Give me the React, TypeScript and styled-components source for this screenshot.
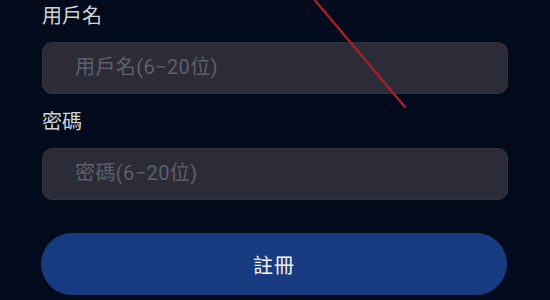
import React from "react";
import styled, { createGlobalStyle } from "styled-components";

const GlobalStyle = createGlobalStyle`
  html, body {
    margin: 0;
    padding: 0;
    background: #020b1b;
  }
  body {
    font-family: Roboto, "Noto Sans CJK TC", "Noto Sans", sans-serif;
  }
`;

const Page = styled.div`
  position: relative;
  width: 550px;
  height: 300px;
  overflow: hidden;
  background: #020b1b;
  box-sizing: border-box;
  padding: 0 42px 0 42px;
  display: flex;
  flex-direction: column;
`;

const Field = styled.div`
  display: flex;
  flex-direction: column;
  gap: 11px;
  margin-bottom: 13px;
`;

const Label = styled.label`
  font-size: 20px;
  line-height: 30px;
  color: #cfd2d8;
  margin-top: ${(p: { $top?: number }) => p.$top ?? 0}px;
`;

const Input = styled.input`
  height: 52px;
  width: 100%;
  box-sizing: border-box;
  border: 1px solid #33343f;
  border-radius: 10px;
  background: #2b2c37;
  padding: 0 0 2px 32px;
  font-family: inherit;
  font-size: 20px;
  letter-spacing: 0.4px;
  color: #e0e0e0;
  outline: none;

  &::placeholder {
    color: #5d5f6a;
  }
`;

const Submit = styled.button`
  margin-top: 20px;
  margin-left: -1px;
  height: 62px;
  width: 466px;
  border: none;
  border-radius: 31px;
  background: #183a80;
  color: #f4f6fb;
  font-family: inherit;
  font-size: 20px;
  letter-spacing: 1px;
  cursor: pointer;
`;

const Stroke = styled.svg`
  position: absolute;
  left: 0;
  top: 0;
  pointer-events: none;
`;

export default function App() {
  return (
    <>
      <GlobalStyle />
      <Page>
        <Field>
          <Label $top={1}>用戶名</Label>
          <Input type="text" placeholder="用戶名(6−20位)" />
        </Field>
        <Field>
          <Label>密碼</Label>
          <Input type="password" placeholder="密碼(6−20位)" />
        </Field>
        <Submit type="button">註冊</Submit>
        <Stroke width="550" height="300">
          <line x1="313" y1="-2" x2="405" y2="107" stroke="#a81e27" strokeWidth="2.4" strokeLinecap="round" />
        </Stroke>
      </Page>
    </>
  );
}
